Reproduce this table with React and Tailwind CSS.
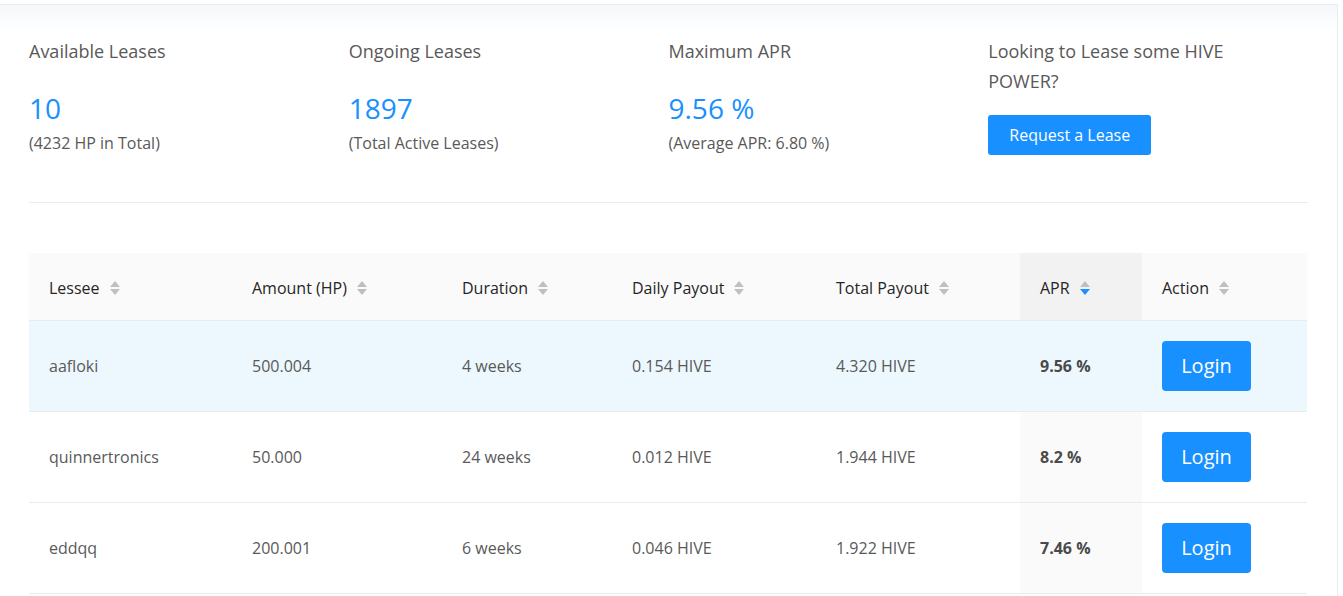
import React from 'react'

const stats = [
  { title: 'Available Leases', value: '10', note: '(4232 HP in Total)' },
  { title: 'Ongoing Leases', value: '1897', note: '(Total Active Leases)' },
  { title: 'Maximum APR', value: '9.56 %', note: '(Average APR: 6.80 %)' },
]

const rows = [
  { lessee: 'aafloki', amount: '500.004', duration: '4 weeks', daily: '0.154 HIVE', total: '4.320 HIVE', apr: '9.56 %', active: true },
  { lessee: 'quinnertronics', amount: '50.000', duration: '24 weeks', daily: '0.012 HIVE', total: '1.944 HIVE', apr: '8.2 %' },
  { lessee: 'eddqq', amount: '200.001', duration: '6 weeks', daily: '0.046 HIVE', total: '1.922 HIVE', apr: '7.46 %' },
]

const Sorter = ({ down }) => (
  <span className="ml-[10px] inline-flex flex-col gap-[2px]">
    <svg width="10" height="6" viewBox="0 0 10 6"><path d="M5 0 L10 6 L0 6 Z" fill="#bfbfbf" /></svg>
    <svg width="10" height="6" viewBox="0 0 10 6"><path d="M0 0 L10 0 L5 6 Z" fill={down ? '#1890ff' : '#bfbfbf'} /></svg>
  </span>
)

const cols = [
  { label: 'Lessee', w: 'w-[203px]' },
  { label: 'Amount (HP)', w: 'w-[210px]' },
  { label: 'Duration', w: 'w-[170px]' },
  { label: 'Daily Payout', w: 'w-[204px]' },
  { label: 'Total Payout', w: 'w-[204px]' },
  { label: 'APR', w: 'w-[122px]' },
  { label: 'Action', w: 'w-[165px]' },
]

const App = () => {
  return (
    <div className="min-h-[596px] bg-white text-[#595959]" style={{ fontFamily: '"Segoe UI", "Open Sans", sans-serif' }}>
      <div className="pt-[4px] w-[1338px]">
        <div className="border-t border-r border-[#e8ecef] bg-gradient-to-b from-[#f4f8fb] to-white to-[26px] px-[29px] pt-[28px] pb-[24px]">
          <div className="grid grid-cols-4 pb-[47px] border-b border-[#ebebeb]">
            {stats.map((s, i) => (
              <div key={i}>
                <div className="text-[18px] leading-[36px]">{s.title}</div>
                <div className="mt-[21px] text-[28px] leading-[36px] text-[#1890ff]">{s.value}</div>
                <div className="text-[16px] leading-[24px] mt-[5px]">{s.note}</div>
              </div>
            ))}
            <div className="pr-[40px]">
              <div className="text-[18px] leading-[30px] mt-[3px]">Looking to Lease some HIVE POWER?</div>
              <button className="mt-[19px] h-[40px] w-[163px] rounded-[3px] bg-[#1890ff] text-[16px] text-white">Request a Lease</button>
            </div>
          </div>

          <table className="mt-[50px] w-[1278px] table-fixed border-collapse text-[16px]">
            <thead>
              <tr className="h-[67px]">
                {cols.map((c, i) => (
                  <th key={i} className={`${c.w} px-[20px] pt-[4px] text-left font-normal text-[#262626] border-b border-[#ebebeb] ${i === 5 ? 'bg-[#f2f2f2]' : 'bg-[#fafafa]'}`}>
                    <span className="inline-flex items-center">{c.label}<Sorter down={i === 5} /></span>
                  </th>
                ))}
              </tr>
            </thead>
            <tbody>
              {rows.map((r, i) => (
                <tr key={i} className={`h-[91px] border-b border-[#ebebeb] ${r.active ? 'bg-[#ecf8fd]' : ''}`}>
                  <td className="px-[20px]">{r.lessee}</td>
                  <td className="px-[20px]">{r.amount}</td>
                  <td className="px-[20px]">{r.duration}</td>
                  <td className="px-[20px]">{r.daily}</td>
                  <td className="px-[20px]">{r.total}</td>
                  <td className={`px-[20px] font-bold text-[#4a4a4a] ${r.active ? '' : 'bg-[#fafafa]'}`}>{r.apr}</td>
                  <td className="px-[20px]">
                    <button className="h-[50px] w-[89px] rounded-[4px] bg-[#1890ff] text-[20px] text-white">Login</button>
                  </td>
                </tr>
              ))}
            </tbody>
          </table>
        </div>
      </div>
    </div>
  )
}

export default App
